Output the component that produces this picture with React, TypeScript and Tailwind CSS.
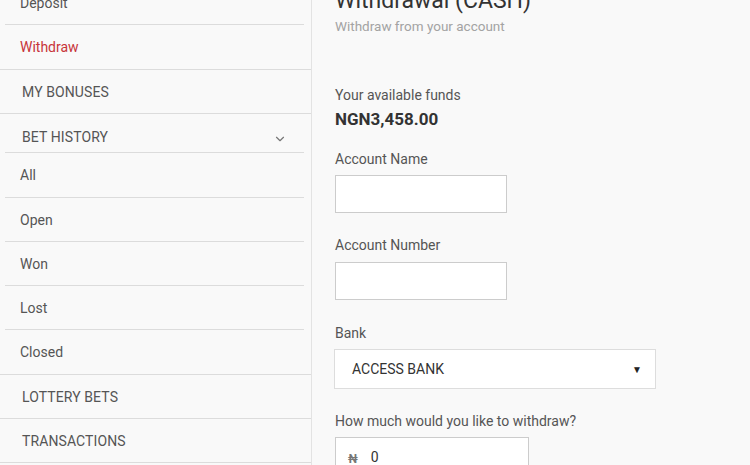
import React from 'react';
import { ChevronDown } from 'lucide-react';

type NavItem = {
  label: string;
  kind: 'top' | 'sub';
  height: string;
  active?: boolean;
  last?: boolean;
  toggle?: boolean;
};

const nav: NavItem[] = [
  { label: 'Deposit', kind: 'sub', height: 'h-[44px]' },
  { label: 'Withdraw', kind: 'sub', height: 'h-[45px]', active: true, last: true },
  { label: 'MY BONUSES', kind: 'top', height: 'h-[44px]' },
  { label: 'BET HISTORY', kind: 'top', height: 'h-[39px]', toggle: true },
  { label: 'All', kind: 'sub', height: 'h-[45px]' },
  { label: 'Open', kind: 'sub', height: 'h-[44px]' },
  { label: 'Won', kind: 'sub', height: 'h-[44px]' },
  { label: 'Lost', kind: 'sub', height: 'h-[44px]' },
  { label: 'Closed', kind: 'sub', height: 'h-[45px]', last: true },
  { label: 'LOTTERY BETS', kind: 'top', height: 'h-[44px]' },
  { label: 'TRANSACTIONS', kind: 'top', height: 'h-[44px]' },
];

const Sidebar: React.FC = () => (
  <aside className="w-[312px] shrink-0 border-r border-[#e3e3e3] bg-[#f9f9f9]">
    <ul className="-mt-[19px]">
      {nav.map((item, i) => {
        // sub rows get an inset divider, except the last one of their group
        const inset = (item.kind === 'sub' && !item.last) || item.toggle;
        return (
          <li key={i} className={`${item.height} relative flex items-center`}>
            <span
              className={`text-[14px] ${
                item.kind === 'top' ? 'pl-[22px] tracking-[0.1px]' : 'pl-[20px]'
              } ${item.toggle ? 'mt-[8px]' : ''} ${item.active ? 'text-[#c7343a]' : 'text-[#555]'}`}
            >
              {item.label}
            </span>
            {item.toggle && (
              <ChevronDown className="absolute right-[24px] top-[18px] h-[14px] w-[14px] text-[#777]" strokeWidth={2} />
            )}
            <div
              className={`absolute bottom-0 h-px bg-[#dcdcdc] ${
                inset ? 'left-[5px] right-[7px]' : 'left-0 right-0'
              }`}
            />
          </li>
        );
      })}
    </ul>
  </aside>
);

const Label: React.FC<{ children: React.ReactNode; className?: string }> = ({ children, className }) => (
  <div className={`text-[14px] leading-[20px] text-[#555] ${className ?? ''}`}>{children}</div>
);

const WithdrawForm: React.FC = () => (
  <main className="flex-1 pl-[23px] bg-[#f9f9f9]">
    <h1 className="-mt-[13px] text-[23px] leading-[28px] text-[#333]">Withdrawal (CASH)</h1>
    <p className="mt-[2px] text-[13.5px] leading-[18px] text-[#a3a3a3]">Withdraw from your account</p>

    <Label className="mt-[50px]">Your available funds</Label>
    <div className="mt-[3px] text-[17px] leading-[22px] font-bold text-[#333]">NGN3,458.00</div>

    <Label className="mt-[19px]">Account Name</Label>
    <input className="mt-[6px] block h-[38px] w-[172px] border border-[#ccc] bg-white outline-none" />

    <Label className="mt-[22px]">Account Number</Label>
    <input className="mt-[7px] block h-[38px] w-[172px] border border-[#ccc] bg-white outline-none" />

    <Label className="mt-[23px]">Bank</Label>
    <div className="mt-[6px] -ml-px flex h-[40px] w-[322px] items-center justify-between border border-[#ddd] bg-white pl-[17px] pr-[13px]">
      <span className="text-[14px] text-[#333]">ACCESS BANK</span>
      <span className="text-[10px] text-[#222]">▼</span>
    </div>

    <Label className="mt-[22px]">How much would you like to withdraw?</Label>
    <div className="mt-[6px] flex h-[40px] w-[194px] items-center border border-[#ccc] bg-white pl-[12px]">
      <span className="mt-[3px] text-[12px] font-bold text-[#777]">₦</span>
      <span className="ml-[13px] text-[14px] text-[#333]">0</span>
    </div>
  </main>
);

export default function App() {
  return (
    <div className="flex h-[465px] w-[750px] overflow-hidden bg-[#f9f9f9] font-['Roboto',sans-serif]">
      <Sidebar />
      <WithdrawForm />
    </div>
  );
}
